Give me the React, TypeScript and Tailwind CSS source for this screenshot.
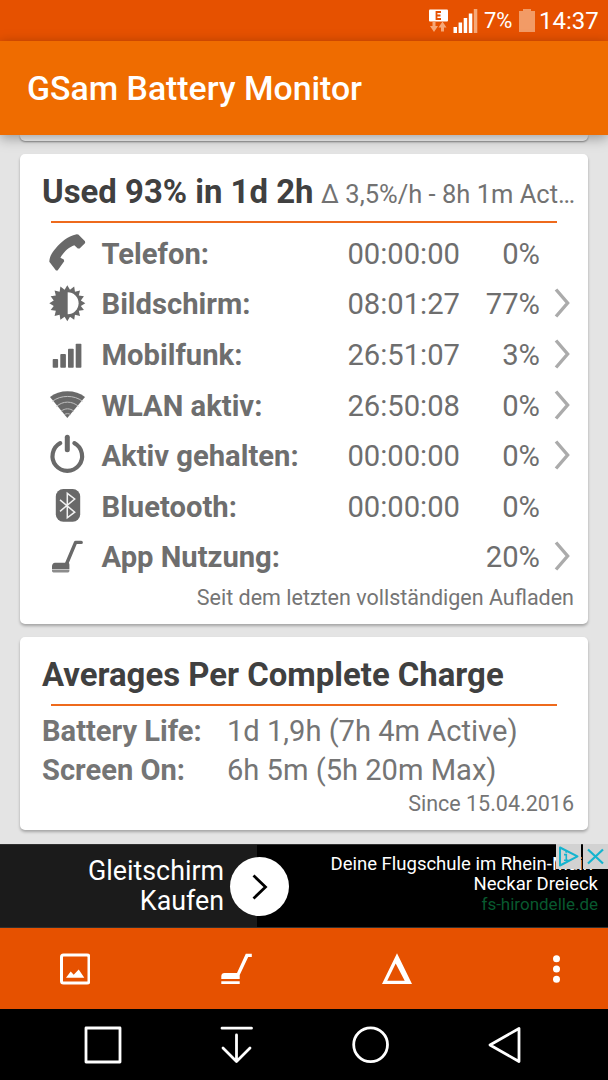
import React from 'react';

interface UsageRow {
  label: string;
  time: string;
  percent: string;
  hasDetails: boolean;
  icon: React.ReactNode;
}

// 16-pointed star used as the rim of the brightness icon
const starPoints = Array.from({ length: 32 }, (_, i) => {
  const radius = i % 2 === 0 ? 18 : 13.8;
  const angle = (i * Math.PI) / 16 - Math.PI / 2;
  return `${(19.3 + radius * Math.cos(angle)).toFixed(2)},${(23.2 + radius * Math.sin(angle)).toFixed(2)}`;
}).join(' ');

const PhoneIcon = () => (
  <path d="M1.3 32.7C1.5 27.5 4 23.5 8 19C13 13 19 7.5 28.7 5.2L30.3 5.6L37 12.2L37.2 14L31.6 19.6L29.8 19.6L26.3 16.2C21 18 15.5 23 12.4 28.8L15.8 30.4L16.2 32.2L9.6 41.4L8 41.4Z" />
);

const BrightnessIcon = () => (
  <>
    <polygon points={starPoints} />
    <path d="M19.7 12.2A10.9 11 0 0 1 19.7 34.2Z" fill="#ffffff" />
  </>
);

const SignalIcon = () => (
  <>
    <rect x="4.7" y="29.1" width="5.4" height="8.7" rx="0.8" />
    <rect x="12.3" y="24.1" width="5.6" height="13.7" rx="0.8" />
    <rect x="20" y="18.8" width="5.7" height="19" rx="0.8" />
    <rect x="27.7" y="13.8" width="5.7" height="24" rx="0.8" />
  </>
);

const WifiIcon = () => (
  <>
    <path d="M19.3 37L2 16C11 8.4 28 8.4 37 16Z" />
    <path d="M4.5 20.3C12.5 13.8 26.5 13.8 34.5 20.3M8.5 25.4C15 19.7 24 19.7 30.5 25.4M13 30.3C17 27 22 27 26 30.3M16 33.9C18 32.2 21 32.2 23 33.9" fill="none" stroke="#c0c0c0" strokeWidth="1" />
  </>
);

const PowerIcon = () => (
  <g fill="none" stroke="#696969" strokeLinecap="round">
    <path d="M12.2 11.1A14.8 14.8 0 1 0 26.4 11.1" strokeWidth="4.2" />
    <path d="M19.3 5.3V17.7" strokeWidth="5" />
  </g>
);

const BluetoothIcon = () => (
  <>
    <rect x="7.8" y="7" width="24.4" height="32.7" rx="7.5" />
    <path d="M12 17.9L26.7 30.2L19.3 35.8V11.3L26.7 17L12 29.3" fill="none" stroke="#f2f2f2" strokeWidth="1.5" />
  </>
);

const VacuumIcon = () => (
  <>
    <path d="M18.5 31L27.6 9.4H33.2" fill="none" stroke="#696969" strokeWidth="3.4" strokeLinecap="round" strokeLinejoin="round" />
    <path d="M7 29.8H20Q21.5 30 21.4 31.5V36H4V33Q4.3 30 7 29.8Z" />
    <path d="M4 36.6H21.4V38Q21.4 39.4 20 39.4H5.4Q4 39.4 4 38Z" fill="#8c8c8c" />
  </>
);

const usageRows: UsageRow[] = [
  { label: 'Telefon:', time: '00:00:00', percent: '0%', hasDetails: false, icon: <PhoneIcon /> },
  { label: 'Bildschirm:', time: '08:01:27', percent: '77%', hasDetails: true, icon: <BrightnessIcon /> },
  { label: 'Mobilfunk:', time: '26:51:07', percent: '3%', hasDetails: true, icon: <SignalIcon /> },
  { label: 'WLAN aktiv:', time: '26:50:08', percent: '0%', hasDetails: true, icon: <WifiIcon /> },
  { label: 'Aktiv gehalten:', time: '00:00:00', percent: '0%', hasDetails: true, icon: <PowerIcon /> },
  { label: 'Bluetooth:', time: '00:00:00', percent: '0%', hasDetails: false, icon: <BluetoothIcon /> },
  { label: 'App Nutzung:', time: '', percent: '20%', hasDetails: true, icon: <VacuumIcon /> },
];

const StatusBar = () => (
  <div className="flex h-[41px] shrink-0 items-center justify-end bg-[#e65100] pr-[11px] text-white">
    <svg width="19" height="24" viewBox="0 0 19 24" className="mr-[5px]">
      <rect width="19" height="12" y="0.5" rx="1" fill="#fff" />
      <path d="M12 3H7.5V10H12M7.5 6.5H11.5" fill="none" stroke="#e65100" strokeWidth="1.8" />
      <path d="M5 12.5V18M13.5 22.5V17.5" stroke="#f6a878" strokeWidth="3" />
      <path d="M1 17H9L5 23ZM9.5 18.5H17.5L13.5 12.5Z" fill="#f6a878" />
    </svg>
    <svg width="25" height="24" viewBox="0 0 25 24" className="mr-[6px]">
      <path d="M0.5 18H4V24H0.5ZM5.6 13.5H9.1V24H5.6ZM10.7 9H14.2V24H10.7ZM15.8 4.5H19.3V24H15.8Z" fill="#fff" />
      <path d="M20.8 0H24.3V24H20.8Z" fill="#f6a878" />
    </svg>
    <span className="w-[35px] text-[22px] leading-none">7%</span>
    <svg width="16" height="23" viewBox="0 0 16 23" className="mb-[1px] mr-[4px]">
      <path d="M4 0H12V2H16V23H0V2H4Z" fill="#f29b66" />
    </svg>
    <span className="w-[58px] text-[24px] leading-none">14:37</span>
  </div>
);

const UsageCard = () => (
  <section className="mt-[13px] h-[470px] shrink-0 rounded-[5px] bg-white pt-[18px] shadow-[0_2px_3px_rgba(0,0,0,0.28)]">
    <div className="flex h-10 items-baseline whitespace-nowrap pl-[22px] leading-10">
      <h2 className="w-[279px] text-[32.9px] font-bold text-[#404040]">Used 93% in 1d 2h</h2>
      <span className="text-[25.5px] text-[#727272]">Δ 3,5%/h - 8h 1m Act…</span>
    </div>
    <div className="ml-[31px] mt-[9px] h-[2px] w-[506px] bg-[#ee6a1c]" />
    <div className="mt-[6.5px]">
      {usageRows.map((row) => (
        <div key={row.label} className="flex h-[50.6px] items-center text-[29.2px] text-[#6e6e6e]">
          <svg width="40" height="50" viewBox="0 0 40 50" fill="#696969" className="-mt-px ml-[28px] shrink-0">
            {row.icon}
          </svg>
          <span className="ml-[13.5px] w-[237.5px] shrink-0 whitespace-nowrap font-bold">{row.label}</span>
          <span className="w-[121px] text-right">{row.time}</span>
          <span className="w-20 text-right">{row.percent}</span>
          {row.hasDetails && (
            <svg width="18" height="32" viewBox="0 0 18 32" className="-mt-[4px] ml-[13px]">
              <path d="M3 2.5L14.6 16L3 29.5" fill="none" stroke="#ababab" strokeWidth="3.4" />
            </svg>
          )}
        </div>
      ))}
    </div>
    <p className="pr-[14px] text-right text-[21.5px] leading-7 text-[#757575]">Seit dem letzten vollständigen Aufladen</p>
  </section>
);

const AveragesCard = () => (
  <section className="mt-[13px] h-[193px] shrink-0 rounded-[5px] bg-white pt-[18px] shadow-[0_2px_3px_rgba(0,0,0,0.28)]">
    <h2 className="whitespace-nowrap pl-[22px] text-[32.9px] font-bold leading-10 text-[#404040]">
      Averages Per Complete Charge
    </h2>
    <div className="ml-[31px] mt-[9px] h-[2px] w-[506px] bg-[#ee6a1c]" />
    <dl className="mt-[6px] grid grid-cols-[185px_1fr] pl-[22px] text-[29.1px] leading-[39px] text-[#757575]">
      <dt className="font-bold">Battery Life:</dt>
      <dd>1d 1,9h (7h 4m Active)</dd>
      <dt className="font-bold">Screen On:</dt>
      <dd>6h 5m (5h 20m Max)</dd>
    </dl>
    <p className="pr-[14px] text-right text-[21.5px] leading-7 text-[#757575]">Since 15.04.2016</p>
  </section>
);

const AdBanner = () => (
  <div className="relative flex h-[84px] shrink-0 border-y border-[#303030] bg-black text-white">
    <div className="w-[257px] bg-[#1b1b1b] pr-[33px] pt-[11px] text-right text-[26.8px] leading-[30px]">
      Gleitschirm
      <br />
      Kaufen
    </div>
    <div className="flex-1 whitespace-nowrap pr-[10px] pt-[9px] text-right text-[18.5px] leading-5">
      <p>Deine Flugschule im Rhein-Main-</p>
      <p>Neckar Dreieck</p>
      <p className="text-[17px] text-[#08592f]">fs-hirondelle.de</p>
    </div>
    <div className="absolute left-[230px] top-[12px] flex h-[59px] w-[59px] items-center justify-center rounded-full bg-white">
      <svg width="16" height="26" viewBox="0 0 16 26">
        <path d="M1.5 1.5L13.5 13L1.5 24.5" fill="none" stroke="#000" strokeWidth="2.8" />
      </svg>
    </div>
    <div className="absolute -top-px right-0 flex gap-[2px]">
      <svg width="25" height="25" viewBox="0 0 25 25" className="bg-[#d2d2d2]">
        <path d="M4 3.5L21.5 12.3L4 21.5Z" fill="none" stroke="#14b4cf" strokeWidth="2" strokeLinejoin="round" />
        <path d="M8 10.6H10.3V16M8 16.2H12.4M10.2 7V8.8" fill="none" stroke="#14b4cf" strokeWidth="1.6" />
      </svg>
      <svg width="25" height="25" viewBox="0 0 25 25" className="bg-[#d2d2d2]">
        <path d="M5 5.5L20 19.5M20 5.5L5 19.5" stroke="#14b4cf" strokeWidth="2.2" />
      </svg>
    </div>
  </div>
);

const Toolbar = () => (
  <div className="flex h-[81px] shrink-0 items-center gap-[130.5px] bg-[#e65100] pl-[60px]">
    <svg width="30" height="32" viewBox="0 0 30 32" className="shrink-0">
      <rect x="1.5" y="2" width="27.5" height="28" rx="2" fill="none" stroke="#fff" strokeWidth="3" />
      <path d="M6 24.7L10.7 18.5L13.7 21.8L18.7 16.5L24.3 24.7Z" fill="#fff" />
    </svg>
    <svg width="32" height="32" viewBox="0 0 32 32" className="shrink-0">
      <path d="M0.3 26V23Q0.5 20 3.5 20H16L24.8 0.7H30.8V4H27.2L18.7 22V26ZM0.3 28.3H18.7V31H0.3Z" fill="#fff" />
    </svg>
    <svg width="30" height="32" viewBox="0 0 30 32" className="-ml-px shrink-0">
      <path d="M15 0.3L30 31H0ZM13.7 10.5L5.2 27.8H22.7Z" fill="#fff" fillRule="evenodd" />
    </svg>
    <svg width="30" height="32" viewBox="0 0 30 32" className="-ml-px shrink-0" fill="#fff">
      <circle cx="14.5" cy="5.8" r="3.5" />
      <circle cx="14.5" cy="16" r="3.5" />
      <circle cx="14.5" cy="26.2" r="3.5" />
    </svg>
  </div>
);

const NavigationBar = () => (
  <div className="grid h-[71px] shrink-0 grid-cols-4 items-center justify-items-center bg-black px-9">
    <svg width="38" height="38" viewBox="0 0 38 38" fill="none" stroke="#fff">
      <rect x="2" y="2" width="34" height="34" strokeWidth="2.8" strokeLinejoin="round" />
    </svg>
    <svg width="38" height="38" viewBox="0 0 38 38" fill="none" stroke="#fff" strokeWidth="2.8" strokeLinecap="round" strokeLinejoin="round">
      <path d="M4 2.2H33.5M18.5 9V35.5M5 22L18.5 35.5L32 22" />
    </svg>
    <svg width="38" height="38" viewBox="0 0 38 38" fill="none" stroke="#fff">
      <circle cx="18.6" cy="18.7" r="16.9" strokeWidth="2.8" />
    </svg>
    <svg width="38" height="38" viewBox="0 0 38 38" fill="none" stroke="#fff">
      <path d="M33 2.5V35.5L4 19Z" strokeWidth="2.8" strokeLinejoin="round" />
    </svg>
  </div>
);

const App: React.FC = () => {
  return (
    <div className="flex h-[1080px] w-[608px] flex-col overflow-hidden bg-[#e4e4e4] font-['Roboto',sans-serif]">
      <StatusBar />
      <header className="relative z-10 flex h-[94px] shrink-0 items-center bg-[#ef6c00] pl-[27px] pt-[3px] shadow-[0_3px_12px_rgba(0,0,0,0.35)]">
        <h1 className="text-[33.8px] font-medium text-white">GSam Battery Monitor</h1>
      </header>
      <main className="flex h-[709px] shrink-0 flex-col px-5">
        {/* Bottom edge of the card scrolled under the header */}
        <div className="h-[6px] shrink-0 rounded-b-[5px] bg-[#f4f4f4] shadow-[0_1px_2px_rgba(0,0,0,0.4)]" />
        <UsageCard />
        <AveragesCard />
      </main>
      <AdBanner />
      <Toolbar />
      <NavigationBar />
    </div>
  );
};

export default App;
